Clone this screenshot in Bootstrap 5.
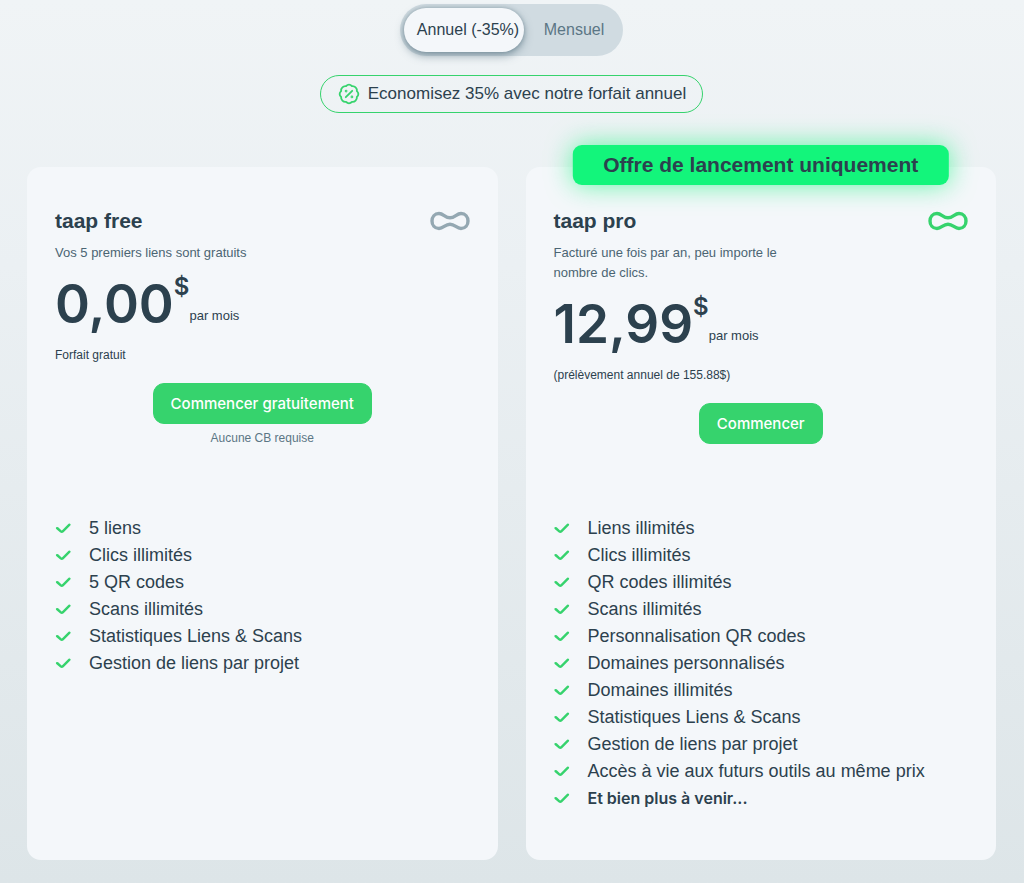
<!DOCTYPE html>
<html lang="fr">
<head>
<meta charset="utf-8">
<meta name="viewport" content="width=device-width, initial-scale=1">
<title>taap – Forfaits</title>
<link href="https://cdn.jsdelivr.net/npm/bootstrap@5.3.0/dist/css/bootstrap.min.css" rel="stylesheet">
<style>
  :root { --ink: #2c414e; --soft: #5b7685; --green: #36d36d; }
  body {
    font-family: "Liberation Sans", Arial, sans-serif;
    color: var(--ink);
    background: linear-gradient(#f0f4f6, #ebf0f3 30%, #dde5e8) no-repeat;
    min-height: 100vh;
  }
  .page { padding: 4px 28px 23px 27px; }
  .period { background: #d0dbe1; padding: 4px; }
  .period label { height: 44px; line-height: 44px; font-size: 16px; color: var(--soft); cursor: pointer; }
  .period .yearly { width: 120px; padding-left: 8px; }
  .period .monthly { width: 95px; padding-left: 5px; }
  .period input:checked + label {
    background: #f4f7fa; color: var(--ink);
    box-shadow: 0 4px 8px rgba(70, 100, 115, .5), 0 0 4px rgba(70, 100, 115, .4);
  }
  .saving { border: 1px solid var(--green); height: 38px; margin-top: 19px; padding: 0 16px 0 17px; gap: 8px; font-size: 17px; }
  .plans { margin-top: 54px; --bs-gutter-x: 28px; }
  .plan { background: #f4f7fa; border-radius: 14px; padding: 40px 28px 48px; }
  .plan-top { min-height: 308px; }
  .plan h2 { font-size: 21px; line-height: 28px; font-weight: 700; margin: 0; }
  .intro { font-size: 13px; line-height: 20px; color: #4b6573; max-width: 240px; margin: 8px 0 0; }
  .amount, .currency, .btn-start, .feats strong { font-family: Inter, "Liberation Sans", sans-serif; font-weight: 600; }
  .amount { font-size: 53px; line-height: 66px; }
  .currency { font-size: 24px; line-height: 32px; }
  .per { font-size: 13px; line-height: 20px; padding-bottom: 11px; }
  .price { margin-top: 8px; }
  .billing { font-size: 12px; line-height: 20px; margin: 8px 0 0; }
  .btn-start {
    --bs-btn-color: #fff; --bs-btn-bg: var(--green); --bs-btn-border-color: var(--green);
    --bs-btn-hover-color: #fff; --bs-btn-hover-bg: #2cc060; --bs-btn-hover-border-color: #2cc060;
    --bs-btn-border-radius: 11px; --bs-btn-line-height: 25px;
    --bs-btn-font-size: 15px; --bs-btn-padding-x: 17px; --bs-btn-padding-y: 7px;
    font-weight: 500; margin-top: 18px;
  }
  .free-note { font-size: 12px; line-height: 18px; color: var(--soft); margin: 5px 0 0; }
  .feats { font-size: 18px; line-height: 27px; }
  .feats strong { font-size: 16px; }
  .feats li { display: flex; align-items: center; gap: 18px; }
  .feats li::before {
    content: ""; width: 16px; height: 12px; flex: none; background: var(--green);
    clip-path: path("M1.2 4.8 Q2.2 4 3.2 4.8 L6.3 7.7 Q6.8 8.1 7.4 7.6 L13.6 1.3 Q14.6 .6 15.4 1.4 Q16 2.2 15.3 3 L8.6 9.8 Q6.8 11.3 5 9.8 L1.2 6.6 Q.4 5.6 1.2 4.8Z");
  }
  .promo {
    top: -22px; width: 80%; background: #13f57b; border-radius: 9px;
    font-size: 21px; line-height: 40px; font-weight: 700;
    box-shadow: 0 0 26px rgba(19, 245, 123, .65);
  }
</style>
</head>
<body>
<main class="page container-fluid">
  <div class="d-flex flex-column align-items-center">
    <div class="period d-flex rounded-pill" role="group" aria-label="Période de facturation">
      <input type="radio" class="btn-check" name="period" id="yearly" checked>
      <label for="yearly" class="yearly rounded-pill text-center">Annuel (-35%)</label>
      <input type="radio" class="btn-check" name="period" id="monthly">
      <label for="monthly" class="monthly rounded-pill text-center">Mensuel</label>
    </div>
    <div class="saving d-flex align-items-center rounded-pill">
      <svg width="22" height="22" viewBox="0 0 24 24" fill="none" stroke="#36d36d" stroke-width="2" stroke-linecap="round" stroke-linejoin="round" aria-hidden="true">
        <path d="M12 1.8Q13.8 1.8 15.2 3.4Q17.6 3.1 19.2 4.8Q20.9 6.4 20.6 8.8Q22.2 10.2 22.2 12T20.6 15.2Q20.9 17.6 19.2 19.2Q17.6 20.9 15.2 20.6Q13.8 22.2 12 22.2T8.8 20.6Q6.4 20.9 4.8 19.2Q3.1 17.6 3.4 15.2Q1.8 13.8 1.8 12T3.4 8.8Q3.1 6.4 4.8 4.8Q6.4 3.1 8.8 3.4Q10.2 1.8 12 1.8Z"/>
        <path d="M8.5 15.5l7-7"/><circle cx="8.8" cy="8.8" r=".5"/><circle cx="15.2" cy="15.2" r=".5"/>
      </svg>
      <span>Economisez 35% avec notre forfait annuel</span>
    </div>
  </div>

  <div class="plans row row-cols-1 row-cols-md-2">
    <div class="col mb-5 mb-md-0">
      <section class="plan h-100">
        <div class="plan-top">
          <div class="d-flex justify-content-between align-items-center">
            <h2>taap free</h2>
            <svg width="40" height="20" viewBox="0 0 40 20" fill="none" stroke="#94a8b2" stroke-width="3.4" aria-hidden="true"><path d="M9 2.5C13.5 2.5 15 6.8 20 6.8S26.5 2.5 31 2.5C35.5 2.5 38 6 38 10S35.5 17.5 31 17.5C26.5 17.5 25 13.2 20 13.2S13.5 17.5 9 17.5C4.5 17.5 2 14 2 10S4.5 2.5 9 2.5Z"/></svg>
          </div>
          <p class="intro">Vos 5 premiers liens sont gratuits</p>
          <div class="price d-flex">
            <span class="amount">0,00</span><span class="currency">$</span><span class="per align-self-end">par mois</span>
          </div>
          <p class="billing">Forfait gratuit</p>
          <div class="text-center">
            <button type="button" class="btn btn-start">Commencer gratuitement</button>
            <p class="free-note">Aucune CB requise</p>
          </div>
        </div>
        <ul class="feats list-unstyled mb-0">
          <li>5 liens</li>
          <li>Clics illimités</li>
          <li>5 QR codes</li>
          <li>Scans illimités</li>
          <li>Statistiques Liens &amp; Scans</li>
          <li>Gestion de liens par projet</li>
        </ul>
      </section>
    </div>
    <div class="col">
      <section class="plan h-100 position-relative">
        <div class="promo position-absolute start-50 translate-middle-x text-center">Offre de lancement uniquement</div>
        <div class="plan-top">
          <div class="d-flex justify-content-between align-items-center">
            <h2>taap pro</h2>
            <svg width="40" height="20" viewBox="0 0 40 20" fill="none" stroke="#36d36d" stroke-width="3.4" aria-hidden="true"><path d="M9 2.5C13.5 2.5 15 6.8 20 6.8S26.5 2.5 31 2.5C35.5 2.5 38 6 38 10S35.5 17.5 31 17.5C26.5 17.5 25 13.2 20 13.2S13.5 17.5 9 17.5C4.5 17.5 2 14 2 10S4.5 2.5 9 2.5Z"/></svg>
          </div>
          <p class="intro">Facturé une fois par an, peu importe le nombre de clics.</p>
          <div class="price d-flex">
            <span class="amount">12,99</span><span class="currency">$</span><span class="per align-self-end">par mois</span>
          </div>
          <p class="billing">(prélèvement annuel de 155.88$)</p>
          <div class="text-center">
            <button type="button" class="btn btn-start">Commencer</button>
          </div>
        </div>
        <ul class="feats list-unstyled mb-0">
          <li>Liens illimités</li>
          <li>Clics illimités</li>
          <li>QR codes illimités</li>
          <li>Scans illimités</li>
          <li>Personnalisation QR codes</li>
          <li>Domaines personnalisés</li>
          <li>Domaines illimités</li>
          <li>Statistiques Liens &amp; Scans</li>
          <li>Gestion de liens par projet</li>
          <li>Accès à vie aux futurs outils au même prix</li>
          <li><strong>Et bien plus à venir...</strong></li>
        </ul>
      </section>
    </div>
  </div>
</main>
<script src="https://cdn.jsdelivr.net/npm/bootstrap@5.3.0/dist/js/bootstrap.bundle.min.js"></script>
</body>
</html>
